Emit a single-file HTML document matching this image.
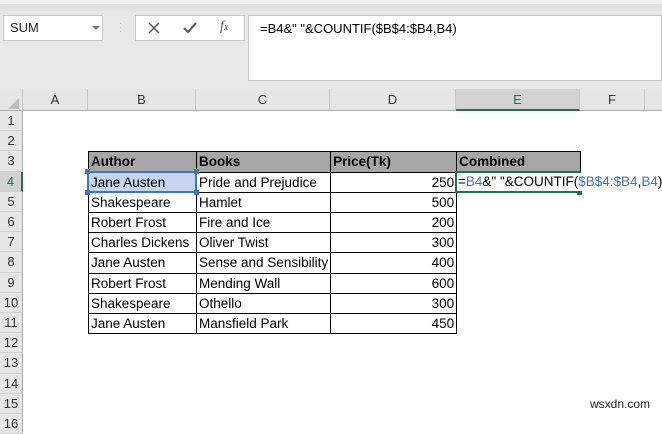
<!DOCTYPE html>
<html><head><style>
*{margin:0;padding:0;box-sizing:border-box}
body{width:662px;height:416px;overflow:hidden;background:#fff;font-family:"Liberation Sans",sans-serif;position:relative}
.a{position:absolute}
.ch{position:absolute;top:89px;height:22px;background:#e6e6e6;border-right:1px solid #c8c8c8;border-bottom:1px solid #ababab;font-size:13px;color:#333;text-align:center;line-height:22px}
.rh{position:absolute;left:0;width:23px;background:#e6e6e6;border-bottom:1px solid #d0d0d0;border-right:1px solid #ababab;font-size:13px;color:#333;text-align:center;line-height:20px}
table{position:absolute;left:88px;top:151px;border-collapse:collapse;table-layout:fixed}
td{border:1px solid #000;font-size:13.5px;padding:0 2px;white-space:nowrap;overflow:hidden;color:#000;line-height:18px}
.h td{background:#a6a6a6;font-weight:bold}
.r{text-align:right}
</style></head><body>
<div class="a" style="left:0;top:0;width:662px;height:4px;background:#f2f2f2"></div>
<div class="a" style="left:0;top:4px;width:662px;height:85px;background:linear-gradient(#dcdcdc,#e8e8e8 10px,#e8e8e8)"></div>
<div class="a" style="left:3px;top:15px;width:100px;height:26px;background:#fff;border:1px solid #c6c6c6;font-size:13px;line-height:24px;padding-left:6px;color:#222">SUM<span class="a" style="left:88px;top:10px;width:0;height:0;border-left:4px solid transparent;border-right:4px solid transparent;border-top:4px solid #777"></span></div>
<div class="a" style="left:119px;top:22px;color:#bbb;font-size:10px;line-height:4px">·<br>·<br>·</div>
<div class="a" style="left:135px;top:15px;width:110px;height:26px;background:#fff;border:1px solid #c6c6c6"></div>
<svg class="a" style="left:147px;top:21px" width="14" height="14"><path d="M2 2L12 12M12 2L2 12" stroke="#555" stroke-width="1.5"/></svg>
<svg class="a" style="left:182px;top:21px" width="16" height="14"><path d="M2 7L6 11L14 2" stroke="#555" stroke-width="2" fill="none"/></svg>
<div class="a" style="left:220px;top:19px;font-family:'Liberation Serif',serif;font-style:italic;font-size:14px;color:#555">f<span style="font-size:10px">x</span></div>
<div class="a" style="left:248px;top:15px;width:414px;height:66px;background:#fff;border:1px solid #c6c6c6;font-size:13px;padding:5px 11px;color:#000">=B4&amp;" "&amp;COUNTIF($B$4:$B4,B4)</div>
<div class="ch" style="left:0;width:23px"><span class="a" style="left:8px;top:9px;width:0;height:0;border-left:11px solid transparent;border-bottom:11px solid #bdbdbd"></span></div>
<div class="ch" style="left:23px;width:65px">A</div>
<div class="ch" style="left:88px;width:108px">B</div>
<div class="ch" style="left:196px;width:134px">C</div>
<div class="ch" style="left:330px;width:126px">D</div>
<div class="ch" style="left:456px;width:124px;background:#d2d2d2;border-bottom:2px solid #217346;color:#217346">E</div>
<div class="ch" style="left:580px;width:65px">F</div>
<div class="ch" style="left:645px;width:20px"></div>
<div class="rh" style="top:111px;height:20px">1</div><div class="rh" style="top:131px;height:20px">2</div><div class="rh" style="top:151px;height:21px">3</div>
<div class="rh" style="top:172px;height:20px;background:#d2d2d2;border-right:2px solid #217346;color:#217346">4</div>
<div class="rh" style="top:192px;height:20px">5</div><div class="rh" style="top:212px;height:20px">6</div><div class="rh" style="top:232px;height:20px">7</div><div class="rh" style="top:252px;height:21px">8</div><div class="rh" style="top:273px;height:20px">9</div><div class="rh" style="top:293px;height:20px">10</div><div class="rh" style="top:313px;height:20px">11</div><div class="rh" style="top:333px;height:20px">12</div><div class="rh" style="top:353px;height:21px">13</div><div class="rh" style="top:374px;height:20px">14</div><div class="rh" style="top:394px;height:20px">15</div><div class="rh" style="top:414px;height:20px">16</div>
<table>
<colgroup><col style="width:108px"><col style="width:134px"><col style="width:126px"><col style="width:124px"></colgroup>
<tr class="h" style="height:21px"><td>Author</td><td>Books</td><td>Price(Tk)</td><td>Combined</td></tr>
<tr style="height:20px"><td style="background:#c5d5ec">Jane Austen</td><td>Pride and Prejudice</td><td class="r">250</td><td style="border:none"></td></tr>
<tr style="height:20px"><td>Shakespeare</td><td>Hamlet</td><td class="r">500</td><td style="border:none"></td></tr>
<tr style="height:20px"><td>Robert Frost</td><td>Fire and Ice</td><td class="r">200</td><td style="border:none"></td></tr>
<tr style="height:20px"><td>Charles Dickens</td><td>Oliver Twist</td><td class="r">300</td><td style="border:none"></td></tr>
<tr style="height:21px"><td>Jane Austen</td><td>Sense and Sensibility</td><td class="r">400</td><td style="border:none"></td></tr>
<tr style="height:20px"><td>Robert Frost</td><td>Mending Wall</td><td class="r">600</td><td style="border:none"></td></tr>
<tr style="height:20px"><td>Shakespeare</td><td>Othello</td><td class="r">300</td><td style="border:none"></td></tr>
<tr style="height:20px"><td>Jane Austen</td><td>Mansfield Park</td><td class="r">450</td><td style="border:none"></td></tr>
</table>
<div class="a" style="left:87px;top:171px;width:110px;height:22px;border:2px solid #4472c4"></div>
<div class="a" style="left:85px;top:169px;width:5px;height:5px;background:#4472c4"></div><div class="a" style="left:194px;top:169px;width:5px;height:5px;background:#4472c4"></div><div class="a" style="left:85px;top:190px;width:5px;height:5px;background:#4472c4"></div><div class="a" style="left:194px;top:190px;width:5px;height:5px;background:#4472c4"></div>
<div class="a" style="left:455px;top:171px;width:126px;height:22px;border:2px solid #217346"></div>
<div class="a" style="left:577px;top:190px;width:5px;height:5px;background:#217346"></div>
<div class="a" style="left:458px;top:173px;font-size:13.5px;line-height:18px;white-space:nowrap;background:#fff;padding-right:2px;border-right:1px solid #000">=<span style="color:#4472c4">B4</span>&amp;" "&amp;COUNTIF(<span style="color:#4472c4">$B$4:$B4</span>,<span style="color:#4472c4">B4</span>)</div>
<div class="a" style="left:590px;top:397px;font-size:12px;color:#222">wsxdn.com</div>
</body></html>
